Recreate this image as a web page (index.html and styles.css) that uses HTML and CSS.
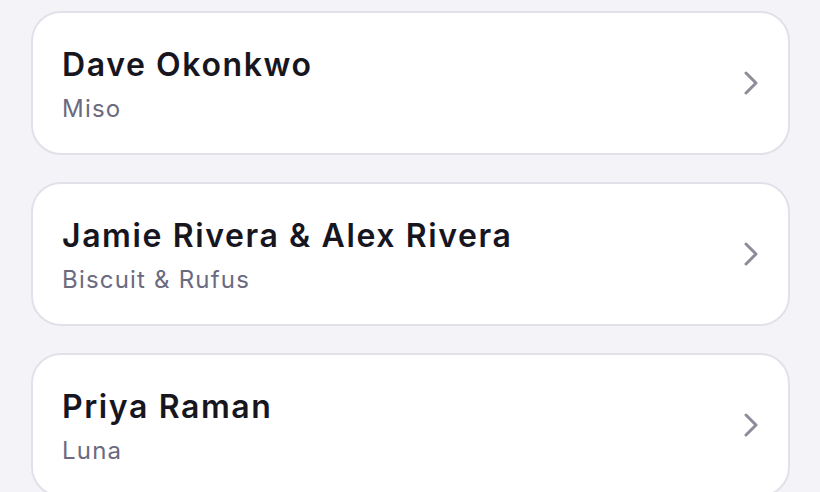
FILE: index.html
```html
<!DOCTYPE html>
<html lang="en">
<head>
<meta charset="utf-8">
<title>Households</title>
<link rel="stylesheet" href="styles.css">
</head>
<body>
<main class="list">
  <a class="card" href="#">
    <div class="info">
      <div class="name">Dave Okonkwo</div>
      <div class="pets">Miso</div>
    </div>
    <svg class="chev" width="16" height="24" viewBox="0 0 16 24" aria-hidden="true"><path d="M3 2 L13 12 L3 22" fill="none" stroke="#8d8c99" stroke-width="3" stroke-linecap="round" stroke-linejoin="round"/></svg>
  </a>
  <a class="card" href="#">
    <div class="info">
      <div class="name">Jamie Rivera &amp; Alex Rivera</div>
      <div class="pets">Biscuit &amp; Rufus</div>
    </div>
    <svg class="chev" width="16" height="24" viewBox="0 0 16 24" aria-hidden="true"><path d="M3 2 L13 12 L3 22" fill="none" stroke="#8d8c99" stroke-width="3" stroke-linecap="round" stroke-linejoin="round"/></svg>
  </a>
  <a class="card" href="#">
    <div class="info">
      <div class="name">Priya Raman</div>
      <div class="pets">Luna</div>
    </div>
    <svg class="chev" width="16" height="24" viewBox="0 0 16 24" aria-hidden="true"><path d="M3 2 L13 12 L3 22" fill="none" stroke="#8d8c99" stroke-width="3" stroke-linecap="round" stroke-linejoin="round"/></svg>
  </a>
</main>
</body>
</html>
```
FILE: styles.css
```css
html, body {
  margin: 0;
  padding: 0;
  background: #f3f3f8;
  height: 100%;
  overflow: hidden;
}
.list {
  display: flex;
  flex-direction: column;
  gap: 27px;
  padding: 11px 30px 0 31px;
}
.card {
  display: flex;
  align-items: center;
  justify-content: space-between;
  height: 144px;
  box-sizing: border-box;
  border: 2px solid #e2e1ea;
  border-radius: 30px;
  background: #ffffff;
  padding: 0 29px 0 29px;
  text-decoration: none;
}
.info {
  display: flex;
  flex-direction: column;
  gap: 10px;
  padding-top: 3px;
}
.name {
  font-family: Inter, "Noto Sans", sans-serif;
  font-weight: 600;
  font-size: 32px;
  line-height: 38px;
  letter-spacing: 1.6px;
  color: #17161f;
}
.pets {
  font-family: Inter, "Noto Sans", sans-serif;
  font-weight: 400;
  font-size: 24px;
  line-height: 30px;
  letter-spacing: 1.2px;
  color: #6b6a7f;
}
.chev {
  display: block;
  flex: none;
}
```
